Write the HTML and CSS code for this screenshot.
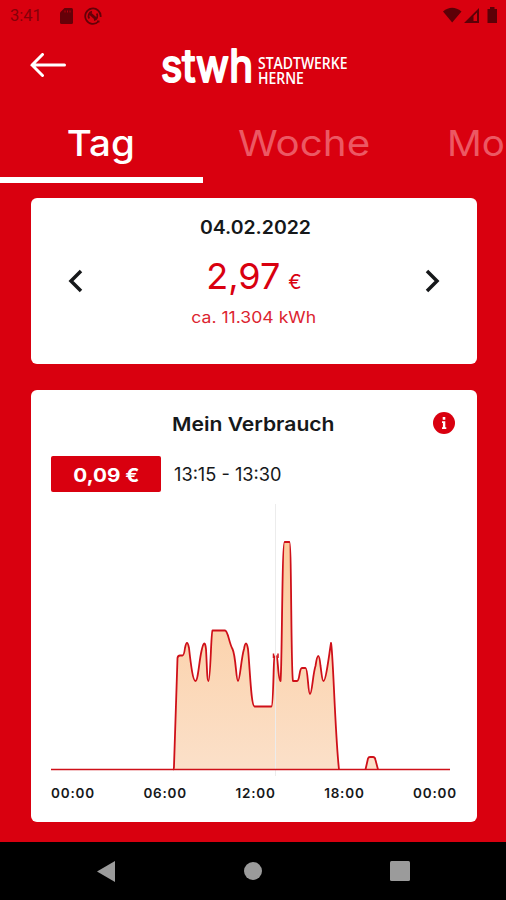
FILE: index.html
```
<!DOCTYPE html>
<html lang="de">
<head>
<meta charset="utf-8">
<title>Mein Verbrauch</title>
<link rel="stylesheet" href="styles.css">
</head>
<body>

<div class="app">
    <!-- Status bar -->
    <div class="status-bar">
        <span class="clock">3:41</span>
        <svg class="sd-icon" width="13" height="16" viewBox="0 0 13 16"><path d="M4.5 0H11.5Q13 0 13 1.500V14.500Q13 16 11.500 16H1.500Q0 16 0 14.500V4.500Z"/><path class="slot" d="M5 2.500v2M7.500 2.500v2M10 2.500v2"/></svg>
        <svg class="sync-icon" width="18" height="18" viewBox="0 0 18 18"><path d="M14.500 14.500A7.700 7.700 0 1 1 16.600 10M13 14.500h2.500"/><path d="M5.300 11.500A4.400 4.400 0 0 1 8 4.700M12.700 6.500A4.400 4.400 0 0 1 10 13.200"/><path class="band" d="M6 6.500L12 11.800"/></svg>
        <svg class="signal-icons" width="56" height="17" viewBox="0 0 56 17">
            <path d="M0 4.500Q9 -3 18.500 4.500L9.200 15.500Z"/>
            <path fill-rule="evenodd" d="M21 16L36 1V16ZM30.500 9V14H34V5.500Z"/>
            <path d="M44.500 2H47V0H51.500V2H54V16H44.500Z"/>
        </svg>
    </div>

    <!-- Header with back button and logo -->
    <div class="header">
        <svg class="back" width="36" height="24" viewBox="0 0 36 24"><path d="M12.500 1.500L2 12L12.500 22.500M2 12H34.500"/></svg>
        <div class="logo">
            <svg width="96" height="50" viewBox="0 0 96 50">
                <text class="logo-short" x="1" y="39" textLength="92" lengthAdjust="spacingAndGlyphs">stwh</text>
            </svg>
            <div class="logo-name">
                <div>STADTWERKE</div>
                <div>HERNE</div>
            </div>
        </div>
    </div>

    <!-- Tabs -->
    <div class="tabs">
        <div class="tab active"><span>Tag</span></div>
        <div class="tab week"><span>Woche</span></div>
        <div class="tab month"><span>Mo</span></div>
    </div>

    <div class="content">
        <!-- Costs of the selected day -->
        <div class="card day-card">
            <svg class="chevron" width="16" height="24" viewBox="0 0 16 24"><path d="M13 2L3 12L13 22"/></svg>
            <div class="day-info">
                <div class="date">04.02.2022</div>
                <div class="price">
                    <span>2,97</span>
                    <span class="currency">€</span>
                </div>
                <div class="usage">ca. 11.304 kWh</div>
            </div>
            <svg class="chevron" width="16" height="24" viewBox="0 0 16 24"><path d="M3 2L13 12L3 22"/></svg>
        </div>

        <!-- Consumption chart -->
        <div class="card chart-card">
            <div class="chart-head">
                <div class="chart-title">Mein Verbrauch</div>
                <svg class="info" width="22" height="22" viewBox="0 0 22 22"><circle cx="11" cy="11" r="11"/><path d="M9.700 5H12.300V7.700H9.700ZM9 9.200H12.300V15.300H13.300V17H9V15.300H9.900V10.900H9Z"/></svg>
            </div>
            <div class="selection">
                <div class="badge"><span>0,09 €</span></div>
                <div class="time">13:15 - 13:30</div>
            </div>
            <svg class="chart" width="399" height="272" viewBox="0 0 399 272">
                <defs>
                    <linearGradient id="area" x1="0" y1="0" x2="0" y2="1">
                        <stop offset="0" stop-color="#fccb9c"/>
                        <stop offset="1" stop-color="#fbe0c9"/>
                    </linearGradient>
                </defs>
                <path class="area" fill="url(#area)" d="M123 265.500L126.500 154Q127 151.500 129 151.500H131.500Q133 151.500 134 144Q136 134 138 144C140 162 142 177 144.500 177C147 177 148 158 150.500 147Q153.500 133 155 145C156 162 156 177 157.500 177C159.500 177 160 128 161.500 126.500H174C177 126.500 178 139 181.500 145C185 152 185 177 187 177C189 177 190 155 193 145Q195 134 197 145C199 165 200 202 203.500 202.500H220.500C222.500 202 222.500 151.500 225 151.500C227 151.500 227 177 229.500 177C231 170 231 38 233.500 38H238.500C240.500 38 240 172 242 177H246C249 177 248 164 251 164H254.500C257 164 257 190 259 190C261 190 262 169 264.500 162Q267.500 142 269.500 162C271 172 271 177 272.500 177C275 177 278 151 280 139C282 145 284 230 288 265.500Z"/>
                <path class="area" fill="#fbe0c9" d="M314.500 265.500L318 253H323L327 265.500Z"/>
                <path class="cursor" d="M224.500 0V272"/>
                <path class="line thin" d="M0 265.500H399"/>
                <path class="line" d="M122 265.500Q123 265.500 123 262L126.500 154Q127 151.500 129 151.500H131.500Q133 151.500 134 144Q136 134 138 144C140 162 142 177 144.500 177C147 177 148 158 150.500 147Q153.500 133 155 145C156 162 156 177 157.500 177C159.500 177 160 128 161.500 126.500H174C177 126.500 178 139 181.500 145C185 152 185 177 187 177C189 177 190 155 193 145Q195 134 197 145C199 165 200 202 203.500 202.500H220.500C222.500 202 222.500 152 223.500 151.500M225.500 151.500C227 152 227 177 229.500 177C231 170 231 38 233.500 38H238.500C240.500 38 240 172 242 177H246C249 177 248 164 251 164H254.500C257 164 257 190 259 190C261 190 262 169 264.500 162Q267.500 142 269.500 162C271 172 271 177 272.500 177C275 177 278 151 280 139C282 145 284 230 288 265.500M314.500 265.500L317 254.500Q317.500 253 319 253H322Q324 253 324.500 256L327 265.500"/>
                <path class="marker" d="M222.500 149.500V154M227 149.500V154"/>
            </svg>
            <div class="axis">
                <span>00:00</span>
                <span>06:00</span>
                <span>12:00</span>
                <span>18:00</span>
                <span>00:00</span>
            </div>
        </div>
    </div>

    <!-- Android navigation -->
    <div class="nav-bar">
        <svg width="18" height="21" viewBox="0 0 18 21"><path d="M0 10.500L18 0V21Z"/></svg>
        <svg width="18" height="18" viewBox="0 0 18 18"><circle cx="9" cy="9" r="9"/></svg>
        <svg width="20" height="20" viewBox="0 0 20 20"><rect width="20" height="20" rx="1.500"/></svg>
    </div>
</div>

</body>
</html>
```
FILE: styles.css
```
:root {
    --red: #d9000f;
    --dark-red: #650008;
    --text: #16181a;
}

* {
    box-sizing: border-box;
}

body {
    margin: 0;
    font-family: Inter, "Open Sans", sans-serif;
    color: var(--text);
    background: var(--red);
}

svg {
    display: block;
    flex: none;
}

.app {
    width: 506px;
    height: 900px;
    display: flex;
    flex-direction: column;
    overflow: hidden;
    background: var(--red);
}

.status-bar {
    height: 31px;
    display: flex;
    align-items: center;
    padding: 0 7px 0 10px;
    fill: var(--dark-red);
}

.clock {
    width: 50px;
    font: 16.5px Roboto, sans-serif;
    color: #850009;
}

.slot {
    stroke: var(--red);
    stroke-width: 0.7;
}

.sync-icon {
    margin-left: 11px;
    fill: none;
    stroke: var(--dark-red);
    stroke-width: 1.8;
}

.sync-icon .band {
    stroke-width: 3;
}

.signal-icons {
    margin-left: auto;
    fill: #5c0007;
}

.header {
    height: 77px;
    display: flex;
    align-items: flex-start;
    padding-left: 30px;
}

.back {
    margin-top: 22px;
    fill: none;
    stroke: #fff;
    stroke-width: 3;
    stroke-linecap: round;
}

.logo {
    display: flex;
    margin: 12px 0 0 94px;
    fill: #fff;
    color: #fff;
}

.logo-short {
    font: 400 45px Inter, sans-serif;
    stroke: #fff;
    stroke-width: 2.2;
    stroke-linejoin: round;
}

.logo-name {
    margin: 13px 0 0 2px;
    font: 600 15.5px/14.5px "Open Sans", sans-serif;
    transform: scaleX(0.9);
    transform-origin: left;
}

.tabs {
    height: 75px;
    display: flex;
    font-size: 36px;
    line-height: 70px;
    color: #ec5863;
    white-space: nowrap;
}

.tab {
    flex: none;
    width: 203px;
    text-align: center;
}

.tab span {
    display: inline-block;
}

.tab.active {
    padding-right: 2px;
    font-weight: 500;
    color: #fff;
    border-bottom: 6px solid #fff;
}

.tab.active span {
    transform: scaleX(1.07);
}

.tab.week span {
    transform: scaleX(1.12);
}

.tab.month {
    width: 100px;
    padding-left: 41px;
    text-align: left;
}

.tab.month span {
    transform: scaleX(1.07);
    transform-origin: left;
}

.content {
    flex: 1;
    display: flex;
    flex-direction: column;
    gap: 26px;
    padding: 15px 29px 0 31px;
}

.card {
    background: #fff;
    border-radius: 6px;
}

.day-card {
    height: 166px;
    display: flex;
    justify-content: space-between;
    padding: 0 37px;
}

.chevron {
    margin-top: 71px;
    fill: none;
    stroke: var(--text);
    stroke-width: 3.5;
}

.day-info {
    display: flex;
    flex-direction: column;
    align-items: center;
}

.date {
    margin: 17px 0 0 2px;
    font-size: 18px;
    font-weight: 600;
    line-height: 26px;
    transform: scaleX(1.08);
}

.price {
    display: flex;
    align-items: baseline;
    gap: 8px;
    margin-top: 13px;
    font-size: 36px;
    line-height: 44px;
    color: var(--red);
}

.currency {
    font-size: 20px;
    line-height: 24px;
}

.usage {
    margin-top: 8px;
    font-size: 16px;
    line-height: 22px;
    color: #dc2430;
    transform: scaleX(1.1);
}

.chart-card {
    height: 432px;
    padding: 0 20px;
}

.chart-head {
    height: 66px;
    display: flex;
    align-items: center;
    padding-left: 121px;
}

.chart-title {
    padding-top: 3px;
    font-size: 19px;
    font-weight: 600;
    transform: scaleX(1.11);
    transform-origin: left;
}

.info {
    margin: 0 2px 0 auto;
    fill: var(--red);
}

.info path {
    fill: #fff;
}

.selection {
    display: flex;
    align-items: center;
    gap: 13px;
}

.badge {
    width: 110px;
    height: 36px;
    line-height: 40px;
    text-align: center;
    font-size: 19px;
    font-weight: 700;
    color: #fff;
    background: var(--red);
    border-radius: 2px;
}

.badge span {
    display: inline-block;
    transform: scaleX(1.09);
}

.time {
    font-size: 18.2px;
}

.chart {
    margin-top: 12px;
}

.line {
    fill: none;
    stroke: #cf1019;
    stroke-width: 1.8;
    stroke-linejoin: round;
}

.line.thin {
    stroke-width: 1.3;
}

.cursor {
    stroke: #ececec;
    stroke-width: 1;
}

.marker {
    stroke: #cf1019;
    stroke-width: 1.5;
}

.axis {
    width: 406px;
    display: flex;
    justify-content: space-between;
    margin-top: 7px;
    font-size: 13.5px;
    font-weight: 600;
    line-height: 20px;
    letter-spacing: 0.8px;
}

.nav-bar {
    height: 58px;
    display: flex;
    justify-content: space-between;
    align-items: center;
    padding: 0 96px 0 97px;
    background: #000;
    fill: #9b9b9b;
}
```
